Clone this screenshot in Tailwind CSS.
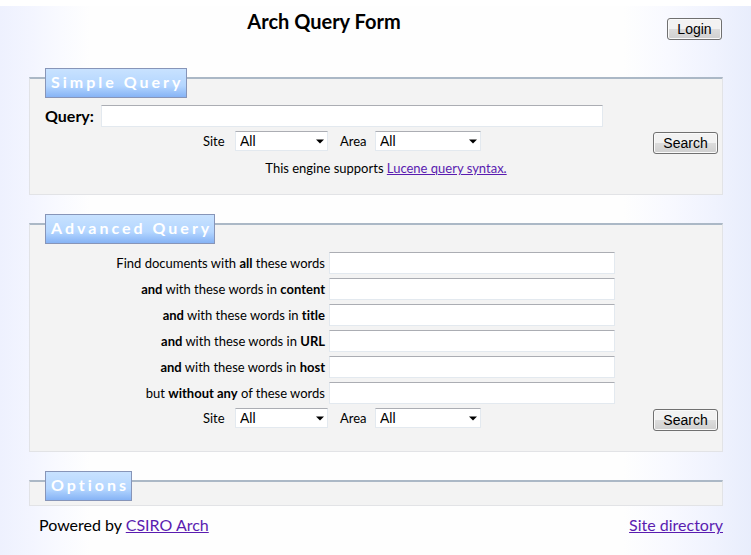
<!DOCTYPE html>
<html lang="en">
<head>
<meta charset="utf-8">
<title>Arch Query Form</title>
<script src="https://cdn.jsdelivr.net/npm/@tailwindcss/browser@4"></script>
</head>
<body class="min-h-screen flex flex-col bg-white pt-[6px] text-black font-['Trebuchet_MS',Lato,sans-serif] text-[13px] leading-5 [font-variant-ligatures:none]">
<div class="grow bg-[linear-gradient(to_right,#eef1fe_0,#f3f5ff_4%,#f9faff_8%,#fefefe_12%,#fefefe_83%,#f8f9ff_89%,#f0f3fe_95%,#e8edfc_100%)] pl-[29px] pr-7">
  <header class="flex items-start justify-between h-[71px]">
    <h1 class="grow pr-12 text-center text-xl leading-[30px] font-bold">Arch Query Form</h1>
    <button type="button" class="mt-3 mr-px h-[22px] w-[55px] rounded-[3px] border border-[#707070] bg-linear-to-b from-[#f2f2f2] from-50% via-[#dddddd] via-50% to-[#cfcfcf] text-sm leading-5 font-['Liberation_Sans',Arial,sans-serif] shadow-[inset_0_0_0_1px_#fafafa]">Login</button>
  </header>

  <main>
    <form>
      <fieldset class="flow-root h-[118px] border border-t-2 border-[#e2e3e6] border-t-[#abb8c6] bg-[#f3f3f3]">
        <legend class="float-left -mt-[11px] ml-[15px] mb-[7px] h-[30px] border border-[#8795b8] bg-linear-to-b from-[#c8e2ff] via-[#b4d6ff] via-60% to-[#86b3f5] pl-[5px] pr-[2px] text-base leading-[26px] font-bold tracking-[3px] text-white">Simple Query</legend>
        <div class="clear-both flex items-center gap-1 pl-[15px] pr-[119px]">
          <label for="q" class="w-[52px] text-base leading-[22px] font-bold whitespace-nowrap">Query:</label>
          <input id="q" type="text" class="h-[22px] min-w-0 grow border border-[#e3e9ef] border-t-[#abadb3] bg-white px-1 outline-none">
        </div>
        <div class="mt-1 flex items-start pl-[25%] pr-1">
          <label for="site1" class="w-8">Site</label>
          <div class="relative">
            <select id="site1" class="h-5 w-[93px] appearance-none border border-[#e3e9ef] border-t-[#abadb3] bg-white pl-1 text-sm leading-[18px] font-['Liberation_Sans',Arial,sans-serif]"><option>All</option></select>
            <svg class="pointer-events-none absolute right-1 top-2 h-[5px] w-2" viewBox="0 0 8 5" aria-hidden="true"><path d="M0 .5h8L4 4.5z"/></svg>
          </div>
          <label for="area1" class="ml-3 w-[35px]">Area</label>
          <div class="relative">
            <select id="area1" class="h-5 w-[106px] appearance-none border border-[#e3e9ef] border-t-[#abadb3] bg-white pl-1 text-sm leading-[18px] font-['Liberation_Sans',Arial,sans-serif]"><option>All</option></select>
            <svg class="pointer-events-none absolute right-1 top-2 h-[5px] w-2" viewBox="0 0 8 5" aria-hidden="true"><path d="M0 .5h8L4 4.5z"/></svg>
          </div>
          <button type="submit" class="mt-px ml-auto h-[22px] w-[65px] rounded-[3px] border border-[#707070] bg-linear-to-b from-[#f2f2f2] from-50% via-[#dddddd] via-50% to-[#cfcfcf] text-sm leading-5 font-['Liberation_Sans',Arial,sans-serif] shadow-[inset_0_0_0_1px_#fafafa]">Search</button>
        </div>
        <p class="mt-1 pl-5 text-center">This engine supports <a href="#" class="text-[#5a1cb0] underline">Lucene query syntax.</a></p>
      </fieldset>
    </form>

    <form class="mt-7">
      <fieldset class="flow-root h-[229px] border border-t-2 border-[#e2e3e6] border-t-[#abb8c6] bg-[#f3f3f3]">
        <legend class="float-left -mt-[11px] ml-[15px] mb-2 h-[30px] border border-[#8795b8] bg-linear-to-b from-[#c8e2ff] via-[#b4d6ff] via-60% to-[#86b3f5] pl-[5px] pr-[2px] text-base leading-[26px] font-bold tracking-[3px] text-white">Advanced Query</legend>
        <div class="clear-both grid grid-cols-[295fr_286fr_103fr] gap-1 text-right leading-[22px]">
          <label for="all">Find documents with <b>all</b> these words</label>
          <input id="all" type="text" class="col-end-3 h-[22px] min-w-0 border border-[#e3e9ef] border-t-[#abadb3] bg-white px-1 outline-none">
          <label for="content" class="col-start-1"><b>and</b> with these words in <b>content</b></label>
          <input id="content" type="text" class="col-end-3 h-[22px] min-w-0 border border-[#e3e9ef] border-t-[#abadb3] bg-white px-1 outline-none">
          <label for="title" class="col-start-1"><b>and</b> with these words in <b>title</b></label>
          <input id="title" type="text" class="col-end-3 h-[22px] min-w-0 border border-[#e3e9ef] border-t-[#abadb3] bg-white px-1 outline-none">
          <label for="url" class="col-start-1"><b>and</b> with these words in <b>URL</b></label>
          <input id="url" type="text" class="col-end-3 h-[22px] min-w-0 border border-[#e3e9ef] border-t-[#abadb3] bg-white px-1 outline-none">
          <label for="host" class="col-start-1"><b>and</b> with these words in <b>host</b></label>
          <input id="host" type="text" class="col-end-3 h-[22px] min-w-0 border border-[#e3e9ef] border-t-[#abadb3] bg-white px-1 outline-none">
          <label for="without" class="col-start-1">but <b>without any</b> of these words</label>
          <input id="without" type="text" class="col-end-3 h-[22px] min-w-0 border border-[#e3e9ef] border-t-[#abadb3] bg-white px-1 outline-none">
        </div>
        <div class="mt-1 flex items-start pl-[25%] pr-1">
          <label for="site2" class="w-8">Site</label>
          <div class="relative">
            <select id="site2" class="h-5 w-[93px] appearance-none border border-[#e3e9ef] border-t-[#abadb3] bg-white pl-1 text-sm leading-[18px] font-['Liberation_Sans',Arial,sans-serif]"><option>All</option></select>
            <svg class="pointer-events-none absolute right-1 top-2 h-[5px] w-2" viewBox="0 0 8 5" aria-hidden="true"><path d="M0 .5h8L4 4.5z"/></svg>
          </div>
          <label for="area2" class="ml-3 w-[35px]">Area</label>
          <div class="relative">
            <select id="area2" class="h-5 w-[106px] appearance-none border border-[#e3e9ef] border-t-[#abadb3] bg-white pl-1 text-sm leading-[18px] font-['Liberation_Sans',Arial,sans-serif]"><option>All</option></select>
            <svg class="pointer-events-none absolute right-1 top-2 h-[5px] w-2" viewBox="0 0 8 5" aria-hidden="true"><path d="M0 .5h8L4 4.5z"/></svg>
          </div>
          <button type="submit" class="mt-px ml-auto h-[22px] w-[65px] rounded-[3px] border border-[#707070] bg-linear-to-b from-[#f2f2f2] from-50% via-[#dddddd] via-50% to-[#cfcfcf] text-sm leading-5 font-['Liberation_Sans',Arial,sans-serif] shadow-[inset_0_0_0_1px_#fafafa]">Search</button>
        </div>
      </fieldset>
    </form>

    <fieldset class="mt-7 flow-root border border-t-2 border-[#e2e3e6] border-t-[#abb8c6] bg-[#f3f3f3]">
      <legend class="float-left -mt-[11px] ml-[15px] mb-1 h-[30px] border border-[#8795b8] bg-linear-to-b from-[#c8e2ff] via-[#b4d6ff] via-60% to-[#86b3f5] pl-[5px] pr-[2px] text-base leading-[26px] font-bold tracking-[3px] text-white">Options</legend>
    </fieldset>
  </main>

  <footer class="mt-2 flex justify-between pl-[10px] text-base leading-[22px]">
    <p>Powered by <a href="#" class="text-[#5a1cb0] underline">CSIRO Arch</a></p>
    <a href="#" class="text-[#5a1cb0] underline">Site directory</a>
  </footer>
</div>
</body>
</html>
